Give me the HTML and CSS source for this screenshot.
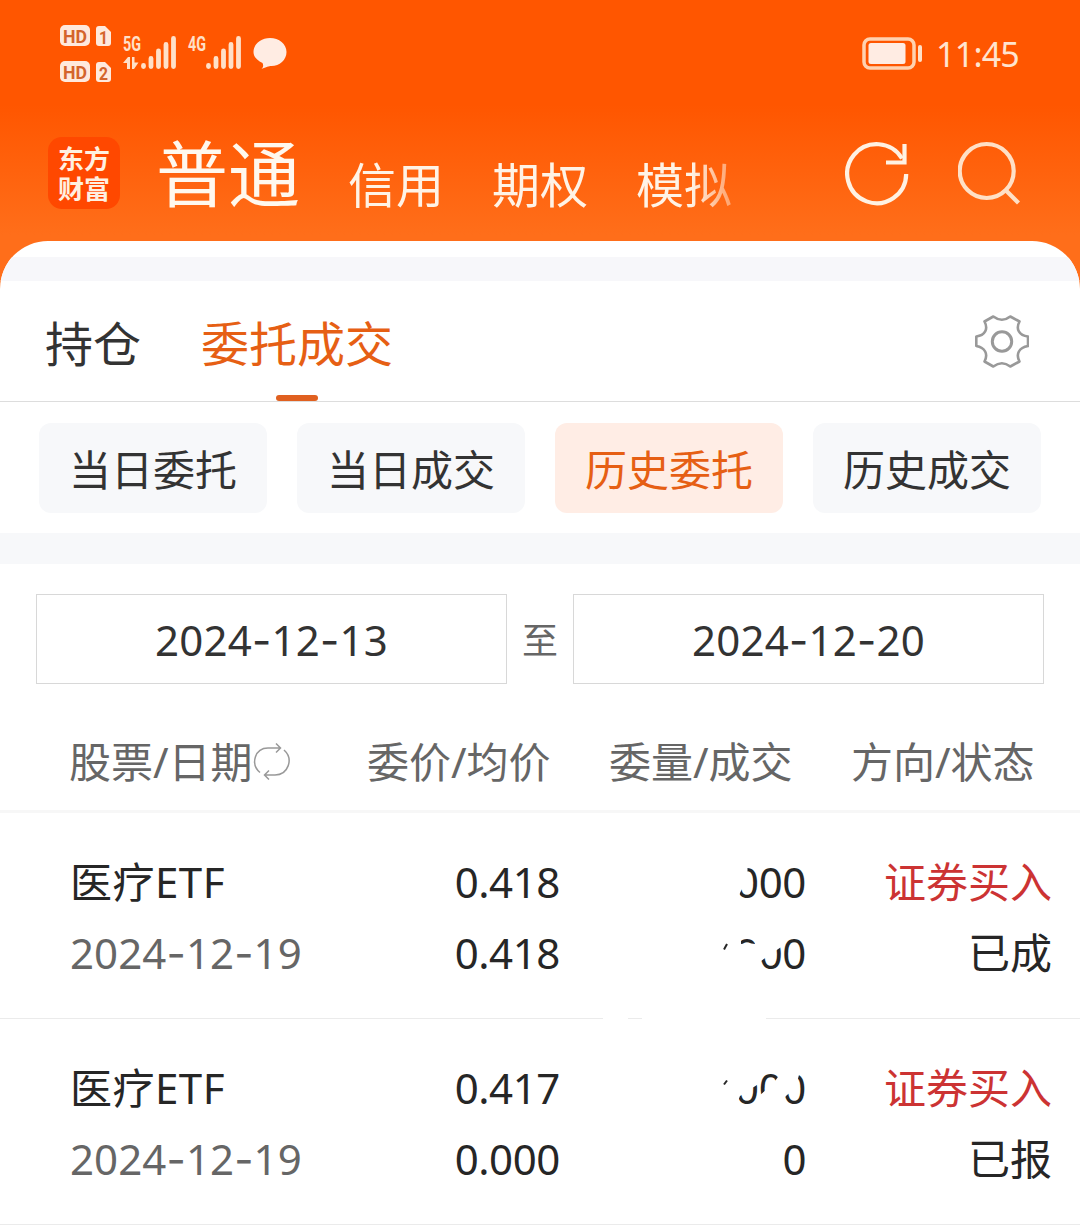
FILE: index.html
```html
<!DOCTYPE html>
<html lang="zh-CN">
<head>
    <meta charset="UTF-8">
    <meta name="viewport" content="width=device-width, initial-scale=1.0">
    <title>委托成交</title>
    <link rel="stylesheet" href="styles.css">
</head>
<body>
    <header class="header">
        <div class="status-bar">
            <svg class="status-icons" width="230" height="64" viewBox="0 0 230 64">
                <g fill="#ffe9dc">
                    <rect x="0" y="5" width="30" height="21" rx="5"/>
                    <path d="M39 6h6l6 6v11q0 3-3 3h-9q-3 0-3-3V9q0-3 3-3z"/>
                    <rect x="0" y="41" width="30" height="21" rx="5"/>
                    <path d="M39 42h6l6 6v11q0 3-3 3h-9q-3 0-3-3V45q0-3 3-3z"/>
                </g>
                <g class="badge-text">
                    <text x="3" y="22.500" textLength="24" lengthAdjust="spacingAndGlyphs">HD</text>
                    <text x="39" y="23.500" textLength="9" lengthAdjust="spacingAndGlyphs">1</text>
                    <text x="3" y="58.500" textLength="24" lengthAdjust="spacingAndGlyphs">HD</text>
                    <text x="39" y="59.500" textLength="9" lengthAdjust="spacingAndGlyphs">2</text>
                </g>
                <g class="net-text">
                    <text x="63" y="31" textLength="18" lengthAdjust="spacingAndGlyphs">5G</text>
                    <text x="128" y="31" textLength="18" lengthAdjust="spacingAndGlyphs">4G</text>
                </g>
                <g fill="none" stroke="#ffe0c8" stroke-width="4.800" stroke-linecap="round">
                    <path d="M83.500 45.500v1M91 38.500v8M98.500 31v15.500M106 24.500v22M113.500 18.500v28"/>
                    <path d="M148.500 45.500v1M156 38.500v8M163.500 31v15.500M171 24.500v22M178.500 18.500v28"/>
                </g>
                <path d="M63 43l5-6h2v12h-3v-6zM72 37h2.500v5.500h4l-4.500 6.500h-2z" fill="#ffe0c8"/>
                <path d="M210 18c9 0 16.500 6 16.500 14s-7 14-15 14c-3 0-5 1-10 3 2-2 2-4 1-6-5-2.500-9-6-9-11 0-8 7.500-14 16.500-14z" fill="#ffece3"/>
            </svg>
            <div class="status-right">
                <svg width="62" height="34" viewBox="0 0 62 34">
                    <rect x="2" y="2" width="50" height="29" rx="6" fill="none" stroke="#ffd2b0" stroke-width="3.500"/>
                    <rect x="6.500" y="6" width="37" height="21" rx="2.500" fill="#ffece3"/>
                    <rect x="56" y="8" width="4" height="17" rx="2" fill="#ffe0c8"/>
                </svg>
                <span class="time">11:45</span>
            </div>
        </div>
        <div class="nav">
            <div class="logo"><span>东方</span><span>财富</span></div>
            <nav class="account-tabs">
                <a class="account active">普通</a>
                <a class="account">信用</a>
                <a class="account">期权</a>
                <a class="account">模拟</a>
            </nav>
            <div class="actions">
                <svg width="66" height="66" viewBox="0 0 66 66" fill="none" stroke="#fff1e2" stroke-width="4.200">
                    <path d="M61.200 33A29.500 29.500 0 1 1 57 17.500"/>
                    <path d="M59.500 3v18.500H41"/>
                </svg>
                <svg width="66" height="66" viewBox="0 0 66 66" fill="none" stroke="#ffe0c6" stroke-width="4.200">
                    <circle cx="28.700" cy="30" r="27"/>
                    <path d="M47.500 49L60.500 62"/>
                </svg>
            </div>
        </div>
    </header>

    <main class="sheet">
        <div class="strip"></div>
        <div class="page-tabs">
            <a class="page-tab">持仓</a>
            <a class="page-tab active">委托成交</a>
            <svg class="gear" width="54" height="54" viewBox="0 0 54 54" fill="none" stroke="#999" stroke-width="2.600" stroke-linejoin="round">
                <path d="M18.300 1.500Q27 8 35.300 1.500L44.500 6.500C40.500 14 44 20.500 53 21.500V31C44 32.500 40.500 39 44.500 46.500L35.300 51.500Q27 45 18.300 51.500L9.500 46.500C13.500 39 10 32.500 1.300 31V21.500C10 20.500 13.500 14 9.500 6.500Z"/>
                <circle cx="27" cy="26.500" r="9.700" stroke-width="3"/>
            </svg>
        </div>

        <div class="filters">
            <button class="filter">当日委托</button>
            <button class="filter">当日成交</button>
            <button class="filter active">历史委托</button>
            <button class="filter">历史成交</button>
        </div>

        <div class="date-range">
            <div class="date-box">2024<i>-</i>12<i>-</i>13</div>
            <span class="to">至</span>
            <div class="date-box">2024<i>-</i>12<i>-</i>20</div>
        </div>

        <div class="list-head">
            <span>股票/日期<svg class="swap" width="38" height="38" viewBox="0 0 38 38" fill="none" stroke="#999" stroke-width="1.500">
                    <path d="M7 30.500C-3 22 2 6 15 6H27M23 1.500l4.500 4.500-4.500 4.500M31 8C41 17 35 33 22 33H12M16 28.500l-4.500 4.500 4.500 4.500"/>
                </svg></span>
            <span>委价/均价</span>
            <span>委量/成交</span>
            <span>方向/状态</span>
        </div>

        <div class="order">
            <span class="name">医疗ETF</span>
            <span class="num">0.418</span>
            <span class="num masked">1000
                <svg class="cover" width="210" height="71" viewBox="0 0 210 71">
                    <path d="M0 0H149.500V24L146 38L142 46L140 53V71H0Z"/>
                </svg>
            </span>
            <span class="side">证券买入</span>
            <span class="date">2024<i>-</i>12<i>-</i>19</span>
            <span class="num">0.418</span>
            <span class="num masked">1000
                <svg class="cover" width="210" height="71" viewBox="0 0 210 71">
                    <path d="M0 0H143V26L150 25L157 26V0H186V27L163 43L161 55V71H0Z"/>
                    <path d="M5 98h25v6H5zM44 98h124v6H44z"/>
                    <path class="trace" d="M126 31.500L129 26"/>
                </svg>
            </span>
            <span class="state">已成</span>
        </div>

        <div class="order">
            <span class="name">医疗ETF</span>
            <span class="num">0.417</span>
            <span class="num masked">1000
                <svg class="cover" width="210" height="71" viewBox="0 0 210 71">
                    <path d="M0 0H162V30L142 43L138 53V71H0Z"/>
                    <path d="M162 42L174 32L180 24V15H201V22L197 36L189 42L186 45V71H162Z"/>
                    <path class="trace" d="M126 31.500L129 27.500"/>
                </svg>
            </span>
            <span class="side">证券买入</span>
            <span class="date">2024<i>-</i>12<i>-</i>19</span>
            <span class="num">0.000</span>
            <span class="num">0</span>
            <span class="state">已报</span>
        </div>
    </main>
</body>
</html>
```
FILE: styles.css
```css
* {
    box-sizing: border-box;
}

body {
    margin: 0;
    width: 1080px;
    height: 1228px;
    overflow: hidden;
    font-family: "Noto Sans", "Noto Sans CJK SC", sans-serif;
    font-size: 42px;
    color: #262626;
    background: #fff;
}

i {
    font-family: Inter, sans-serif;
    font-style: normal;
}

/* header */
.header {
    height: 290px;
    background: linear-gradient(#ff5600 0, #ff5600 105px, #ff6e1a 235px, #ff6e1a 100%);
}

.status-bar {
    display: flex;
    justify-content: space-between;
    height: 105px;
    padding: 20px 61px 0 60px;
}

.badge-text {
    font: bold 19px Roboto, sans-serif;
    fill: #d4642c;
}

.net-text {
    font: bold 20px Roboto, sans-serif;
    fill: #ffe0c8;
}

.status-right {
    display: flex;
    align-items: center;
    gap: 12px;
    height: 68px;
}

.time {
    font-size: 34px;
    letter-spacing: -0.8px;
    color: #ffe4cf;
    white-space: nowrap;
}

.nav {
    display: flex;
    align-items: center;
    height: 136px;
    padding: 0 56px 0 48px;
}

.logo {
    display: flex;
    flex-direction: column;
    align-items: center;
    justify-content: center;
    width: 72px;
    height: 72px;
    border-radius: 14px;
    background: #ff4800;
    color: #fff0e0;
    font-family: "Noto Sans CJK SC", sans-serif;
    font-size: 26px;
    font-weight: bold;
    line-height: 30px;
}

.account-tabs {
    display: flex;
    align-items: flex-end;
    gap: 48px;
    width: 600px;
    margin-top: -6px;
    margin-left: 36px;
    -webkit-mask-image: linear-gradient(90deg, #000 535px, transparent 605px);
    mask-image: linear-gradient(90deg, #000 535px, transparent 605px);
}

.account {
    font-family: "Noto Sans CJK SC", sans-serif;
    font-size: 48px;
    line-height: 74px;
    color: #fff3e6;
}

.account.active {
    font-size: 72px;
    line-height: 98px;
    color: #fff8ee;
}

.actions {
    display: flex;
    gap: 47px;
    margin-top: 2px;
    margin-left: auto;
}

/* white sheet over the header */
.sheet {
    margin-top: -49px;
    padding-top: 16px;
    border-radius: 48px 48px 0 0;
    background: #fff;
    overflow: hidden;
}

.strip {
    height: 24px;
    background: #f7f7fa;
}

.page-tabs {
    display: flex;
    height: 121px;
    padding: 0 51px 0 45px;
    border-bottom: 1px solid #ddd;
}

.page-tab {
    position: relative;
    height: 120px;
    margin-right: 60px;
    font-size: 48px;
    line-height: 125px;
    color: #333;
}

.page-tab.active {
    color: #e65f14;
}

.page-tab.active::after {
    content: "";
    position: absolute;
    left: 75px;
    bottom: 0;
    width: 42px;
    height: 6px;
    border-radius: 3px;
    background: #e06020;
}

.gear {
    margin: 34px 0 0 auto;
}

.filters {
    display: grid;
    grid-template-columns: repeat(4, 228px);
    gap: 30px;
    padding: 21px 39px 20px;
    border-bottom: 31px solid #f7f8fa;
}

.filter {
    height: 90px;
    padding: 0 0 2px;
    border: none;
    border-radius: 12px;
    background: #f7f8fa;
    font: inherit;
    color: #333;
}

.filter.active {
    background: #ffede5;
    color: #e65f14;
}

.date-range {
    display: flex;
    align-items: center;
    justify-content: space-between;
    padding: 30px 36px 0;
}

.date-box {
    width: 471px;
    height: 90px;
    border: 1px solid #d8d8d8;
    line-height: 90px;
    letter-spacing: 0.2px;
    text-align: center;
    color: #333;
}

.to {
    height: 90px;
    font-size: 36px;
    line-height: 94px;
    color: #666;
}

/* order list */
.list-head {
    display: grid;
    grid-template-columns: 298px 242px 242px auto;
    height: 129px;
    padding-left: 69px;
    padding-top: 42px;
    border-bottom: 3px solid #f7f7f7;
    line-height: 72px;
    color: #666;
    white-space: nowrap;
}

.swap {
    vertical-align: -2px;
}

.order {
    display: grid;
    grid-template-columns: 299px 191px 246px 246px;
    grid-auto-rows: 71px;
    height: 206px;
    padding: 33px 28px 0 70px;
    border-bottom: 1px solid #ebebeb;
    line-height: 71px;
}

.name {
    letter-spacing: 0.5px;
}

.date {
    color: #666;
    letter-spacing: 0.1px;
}

.num,
.side,
.state {
    text-align: right;
}

.num {
    letter-spacing: -0.4px;
}

.side {
    color: #cc3333;
}

/* hidden quantities */
.masked {
    position: relative;
}

.cover {
    position: absolute;
    right: -2px;
    top: 1px;
    fill: #fff;
    overflow: visible;
}

.trace {
    fill: none;
    stroke: #262626;
    stroke-width: 2;
}
```
